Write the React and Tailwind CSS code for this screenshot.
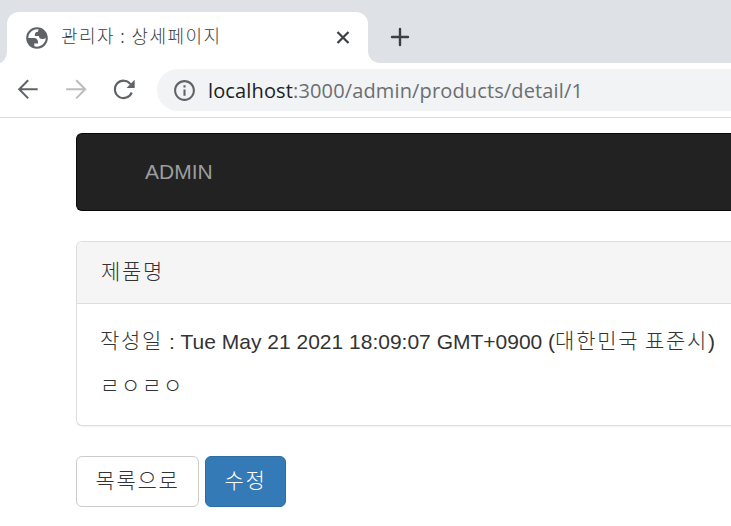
import React from "react";

const Ko = ({ children }) => (
  <span className="relative -top-px font-['Noto_Sans_CJK_KR',sans-serif] font-light tracking-[1.7px] text-[21px] leading-none">{children}</span>
);

function TabStrip() {
  return (
    <div className="flex h-[63px] items-end bg-[#dee1e6]">
      <svg className="h-[51px] w-[7px] shrink-0" viewBox="0 0 7 51">
        <path d="M7 39C7 45 4 50 0 51H7Z" fill="#fff" />
      </svg>
      <div className="flex h-[51px] w-[361px] shrink-0 items-center rounded-t-[12px] bg-white pl-[17px] pr-[16px]">
        <svg className="size-[26px] shrink-0" viewBox="0 0 24 24" fill="#5f6368">
          <path
            fillRule="evenodd"
            d="M12 2C6.480 2 2 6.480 2 12s4.480 10 10 10 10-4.480 10-10S17.520 2 12 2zM4 12h4.400c3.407.022 4.922 1.730 4.543 5.127H9.488v2.470a8.004 8.004 0 0 0 10.498-8.083C19.327 12.504 18.332 13 17 13c-2.137 0-3.206-.916-3.206-2.750h-3.748c-.274-2.728.683-4.092 2.870-4.092 0-.975.327-1.597.811-1.970A8 8 0 0 0 4 12z"
          />
        </svg>
        <span className="ml-[11px] mb-[6px] whitespace-nowrap font-['Noto_Sans_CJK_KR',sans-serif] text-[18px] font-light leading-none tracking-[1.4px] text-[#3c4043]">
          관리자 : 상세페이지
        </span>
        <svg className="ml-auto size-[18px]" viewBox="0 0 18 18" stroke="#3c4043" strokeWidth="2.200">
          <path d="M3.500 3l11 11M14.500 3l-11 11" />
        </svg>
      </div>
      <svg className="h-[51px] w-[12px] shrink-0" viewBox="0 0 12 51">
        <path d="M0 39C0 46 5 51 12 51H0Z" fill="#fff" />
      </svg>
      <svg className="mb-[16px] ml-[10px] size-5" viewBox="0 0 20 20" stroke="#3c4043" strokeWidth="2.400" strokeLinecap="round">
        <path d="M10 2v16M2 10h16" />
      </svg>
    </div>
  );
}

function Toolbar() {
  return (
    <div className="flex h-[55px] items-center border-b border-[#d9dbde] bg-white pl-[13px]">
      <svg className="size-[30px] shrink-0" viewBox="0 0 30 30" fill="none" stroke="#5f6368" strokeWidth="2">
        <path d="M15.200 5.200L6.200 14.300l9 9.100M6.200 14.300h18.500" />
      </svg>
      <svg className="ml-[18px] size-[30px] shrink-0" viewBox="0 0 30 30" fill="none" stroke="#babcbe" strokeWidth="2">
        <path d="M15.200 5.200l9 9.100-9 9.100M24.200 14.300H5.200" />
      </svg>
      <svg className="ml-[18px] size-[30px] shrink-0" viewBox="0 0 30 30" fill="none" stroke="#5f6368" strokeWidth="2.100">
        <path d="M22.700 17.500A8.700 8.700 0 1 1 21.500 9.100" />
        <path d="M25.700 4.800v8.200h-8.200z" fill="#5f6368" stroke="none" />
      </svg>
      <div className="ml-[18px] flex h-[42px] flex-1 items-center rounded-l-full bg-[#f1f3f4] pl-[15px]">
        <svg className="mt-px size-[25px] shrink-0" viewBox="0 0 24 24" fill="#5f6368">
          <path d="M11 17h2v-6h-2v6zm1-15C6.480 2 2 6.480 2 12s4.480 10 10 10 10-4.480 10-10S17.520 2 12 2zm0 18c-4.410 0-8-3.590-8-8s3.590-8 8-8 8 3.590 8 8-3.590 8-8 8zM11 9h2V7h-2v2z" />
        </svg>
        <span className="ml-[11px] mt-[2px] whitespace-nowrap font-['Open_Sans',sans-serif] text-[20px] leading-none tracking-[0.140px] text-[#6b6e72]">
          <span className="text-[#202124]">localhost</span>:3000/admin/products/detail/1
        </span>
      </div>
    </div>
  );
}

export default function App() {
  return (
    <div className="h-[526px] w-[731px] overflow-hidden bg-white font-['Liberation_Sans','Noto_Sans_CJK_KR',sans-serif] text-[21px] text-[#333]">
      <TabStrip />
      <Toolbar />
      <main className="pl-[76px] pt-[15px]">
        <nav className="flex h-[78px] items-center rounded-l-[6px] border border-r-0 border-[#080808] bg-[#222] pl-[68px] text-[#9d9d9d]">
          ADMIN
        </nav>
        <section className="mt-[30px] h-[185px] rounded-l-[6px] border border-r-0 border-[#ddd] shadow-[0_1px_1px_rgba(0,0,0,0.05)]">
          <header className="flex h-[62px] items-center rounded-tl-[5px] border-b border-[#ddd] bg-[#f5f5f5] pb-[3px] pl-[24px]">
            <Ko>제품명</Ko>
          </header>
          <div className="flex flex-col gap-[15px] whitespace-nowrap pl-[23px] pt-[23px]">
            <p className="h-[30px] leading-[30px]">
              <Ko>작성일</Ko> : Tue May 21 2021 18:09:07 GMT+0900 (<Ko>대한민국</Ko> <Ko>표준시</Ko>)
            </p>
            <p className="h-[30px] leading-[30px]">
              <Ko>ㄹㅇㄹㅇ</Ko>
            </p>
          </div>
        </section>
        <div className="mt-[30px] flex gap-[6px]">
          <button className="flex h-[51px] w-[123px] items-center justify-center rounded-[6px] border border-[#ccc] bg-white pb-[3px]">
            <Ko>목록으로</Ko>
          </button>
          <button className="flex h-[51px] w-[81px] items-center justify-center rounded-[6px] border border-[#2e6da4] bg-[#337ab7] pb-[3px] text-white">
            <Ko>수정</Ko>
          </button>
        </div>
      </main>
    </div>
  );
}
